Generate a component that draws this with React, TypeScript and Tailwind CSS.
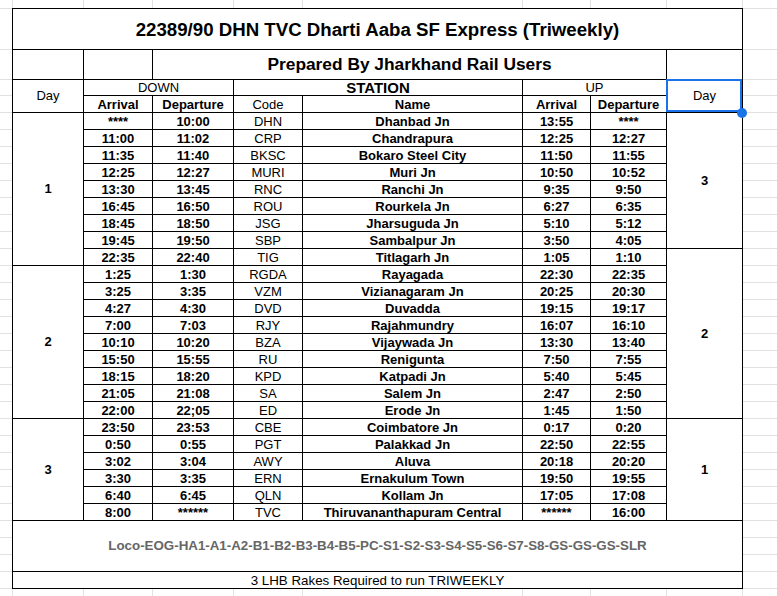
import React from "react";

const rows: string[][] = [
  ["****", "10:00", "DHN", "Dhanbad Jn", "13:55", "****"],
  ["11:00", "11:02", "CRP", "Chandrapura", "12:25", "12:27"],
  ["11:35", "11:40", "BKSC", "Bokaro Steel City", "11:50", "11:55"],
  ["12:25", "12:27", "MURI", "Muri Jn", "10:50", "10:52"],
  ["13:30", "13:45", "RNC", "Ranchi Jn", "9:35", "9:50"],
  ["16:45", "16:50", "ROU", "Rourkela Jn", "6:27", "6:35"],
  ["18:45", "18:50", "JSG", "Jharsuguda Jn", "5:10", "5:12"],
  ["19:45", "19:50", "SBP", "Sambalpur Jn", "3:50", "4:05"],
  ["22:35", "22:40", "TIG", "Titlagarh Jn", "1:05", "1:10"],
  ["1:25", "1:30", "RGDA", "Rayagada", "22:30", "22:35"],
  ["3:25", "3:35", "VZM", "Vizianagaram Jn", "20:25", "20:30"],
  ["4:27", "4:30", "DVD", "Duvadda", "19:15", "19:17"],
  ["7:00", "7:03", "RJY", "Rajahmundry", "16:07", "16:10"],
  ["10:10", "10:20", "BZA", "Vijaywada Jn", "13:30", "13:40"],
  ["15:50", "15:55", "RU", "Renigunta", "7:50", "7:55"],
  ["18:15", "18:20", "KPD", "Katpadi Jn", "5:40", "5:45"],
  ["21:05", "21:08", "SA", "Salem Jn", "2:47", "2:50"],
  ["22:00", "22;05", "ED", "Erode Jn", "1:45", "1:50"],
  ["23:50", "23:53", "CBE", "Coimbatore Jn", "0:17", "0:20"],
  ["0:50", "0:55", "PGT", "Palakkad Jn", "22:50", "22:55"],
  ["3:02", "3:04", "AWY", "Aluva", "20:18", "20:20"],
  ["3:30", "3:35", "ERN", "Ernakulum Town", "19:50", "19:55"],
  ["6:40", "6:45", "QLN", "Kollam Jn", "17:05", "17:08"],
  ["8:00", "******", "TVC", "Thiruvananthapuram Central", "******", "16:00"],
];

const colW = ["w-[69px]", "w-[81px]", "w-[69px]", "w-[220px]", "w-[68px]", "w-[76px]"];
const colWeight = ["font-bold", "font-bold", "font-normal", "font-bold", "font-bold", "font-bold"];

const stripW = ["w-[71px]", "w-[69px]", "w-[81px]", "w-[69px]", "w-[220px]", "w-[68px]", "w-[76px]", "w-[76px]"];

const gutterH: string[] = [
  "h-[9px]",
  "h-[41px]",
  "h-[30px]",
  "h-[16px]",
  "h-[17px]",
  ...Array(24 + 3 + 1).fill("h-[17px]"),
];

const cellBase = "shrink-0 border-r border-b border-black flex items-end justify-center leading-[14px] whitespace-nowrap";

function Gutter({ width }: { width: string }) {
  return (
    <div className={`${width} shrink-0 flex flex-col`}>
      {gutterH.map((h, i) => (
        <div key={i} className={`${h} shrink-0 border-b border-[#e2e2e2]`} />
      ))}
      <div className="flex-1" />
    </div>
  );
}

function Strip({ height }: { height: string }) {
  return (
    <div className={`${height} flex border-l border-[#e2e2e2] shrink-0`}>
      {stripW.map((w, i) => (
        <div key={i} className={`${w} shrink-0 border-r border-[#e2e2e2]`} />
      ))}
    </div>
  );
}

export default function App() {
  return (
    <div className="w-[777px] h-[596px] bg-white flex overflow-hidden font-['Liberation_Sans',Arial,sans-serif] text-black text-[13px]">
      <Gutter width="w-[12px]" />

      <div className="w-[731px] shrink-0 flex flex-col">
        <Strip height="h-[8px]" />

        <div className="border-l border-t border-black flex flex-col">
          {/* Title */}
          <div className="h-[41px] w-[730px] border-r border-b border-black flex items-center justify-center pt-[2px] text-[18.67px] font-bold">
            22389/90 DHN TVC Dharti Aaba SF Express (Triweekly)
          </div>

          {/* Prepared */}
          <div className="h-[30px] flex">
            <div className="w-[71px] shrink-0 border-r border-b border-black" />
            <div className="w-[69px] shrink-0 border-r border-b border-black" />
            <div className="w-[514px] shrink-0 border-r border-b border-black flex items-center justify-center text-[17.33px] font-bold">
              Prepared By Jharkhand Rail Users
            </div>
            <div className="w-[76px] shrink-0 border-r border-b border-black" />
          </div>

          {/* Header */}
          <div className="h-[33px] flex">
            <div className="w-[71px] shrink-0 border-r border-b border-black flex items-center justify-center">
              Day
            </div>
            <div className="w-[583px] shrink-0 flex flex-col">
              <div className="h-[16px] flex">
                <div className={`w-[150px] ${cellBase}`}>DOWN</div>
                <div className={`w-[289px] ${cellBase} text-[15px] font-bold`}>STATION</div>
                <div className={`w-[144px] ${cellBase}`}>UP</div>
              </div>
              <div className="h-[17px] flex">
                <div className={`w-[69px] ${cellBase} font-bold`}>Arrival</div>
                <div className={`w-[81px] ${cellBase} font-bold`}>Departure</div>
                <div className={`w-[69px] ${cellBase}`}>Code</div>
                <div className={`w-[220px] ${cellBase} font-bold`}>Name</div>
                <div className={`w-[68px] ${cellBase} font-bold`}>Arrival</div>
                <div className={`w-[76px] ${cellBase} font-bold`}>Departure</div>
              </div>
            </div>
            <div className="relative w-[76px] shrink-0 border-r border-b border-black flex items-center justify-center">
              Day
              <div className="absolute -left-px -top-px w-[76px] h-[33px] border-2 border-[#1a73e8]" />
              <div className="absolute left-[70px] top-[28px] w-[10px] h-[10px] rounded-full bg-[#1a73e8] z-10" />
            </div>
          </div>

          {/* Body */}
          <div className="h-[408px] flex">
            <div className="w-[71px] shrink-0 flex flex-col font-bold">
              <div className="h-[153px] border-r border-b border-black flex items-center justify-center">1</div>
              <div className="h-[153px] border-r border-b border-black flex items-center justify-center">2</div>
              <div className="h-[102px] border-r border-b border-black flex items-center justify-center">3</div>
            </div>
            <div className="w-[583px] shrink-0 flex flex-col">
              {rows.map((r, i) => (
                <div key={i} className="h-[17px] flex">
                  {r.map((v, j) => (
                    <div key={j} className={`${colW[j]} ${colWeight[j]} ${cellBase}`}>
                      {v}
                    </div>
                  ))}
                </div>
              ))}
            </div>
            <div className="w-[76px] shrink-0 flex flex-col font-bold">
              <div className="h-[136px] border-r border-b border-black flex items-center justify-center">3</div>
              <div className="h-[170px] border-r border-b border-black flex items-center justify-center">2</div>
              <div className="h-[102px] border-r border-b border-black flex items-center justify-center">1</div>
            </div>
          </div>

          {/* Loco */}
          <div className="h-[51px] w-[730px] border-r border-b border-black flex items-center justify-center text-[13.33px] font-bold text-[#666666]">
            Loco-EOG-HA1-A1-A2-B1-B2-B3-B4-B5-PC-S1-S2-S3-S4-S5-S6-S7-S8-GS-GS-GS-SLR
          </div>

          {/* Footer */}
          <div className={`h-[17px] w-[730px] ${cellBase} text-[13.33px]`}>
            3 LHB Rakes Required to run TRIWEEKLY
          </div>
        </div>

        <Strip height="flex-1" />
      </div>

      <Gutter width="w-[34px]" />
    </div>
  );
}
